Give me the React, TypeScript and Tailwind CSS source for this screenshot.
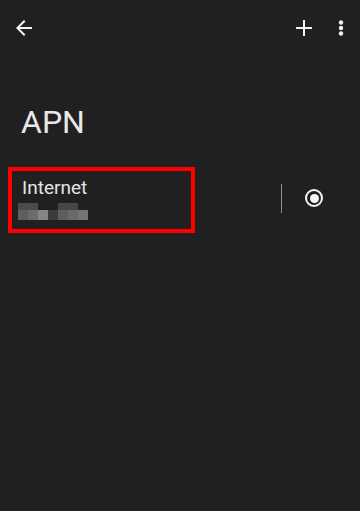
export default function App() {
  return (
    <div className="h-[511px] w-[360px] bg-[#202020] font-['Roboto',sans-serif]">
      {/* Toolbar */}
      <div className="flex h-[56px] items-center justify-between pl-3 pr-4">
        <svg viewBox="0 0 24 24" className="h-6 w-6 fill-[#f2f2f2]">
          <path d="M20 11H7.83l5.59-5.59L12 4l-8 8 8 8 1.41-1.41L7.83 13H20v-2z" />
        </svg>
        <div className="flex items-center gap-[26px]">
          <svg viewBox="0 0 16 16" className="h-4 w-4 stroke-[#f2f2f2]" strokeWidth="2">
            <path d="M8 0v16M0 8h16" />
          </svg>
          <svg viewBox="0 0 6 16" className="h-4 w-[6px] fill-[#f2f2f2]">
            <circle cx="3" cy="2.5" r="2.2" />
            <circle cx="3" cy="8" r="2.2" />
            <circle cx="3" cy="13.5" r="2.2" />
          </svg>
        </div>
      </div>

      {/* Title */}
      <div className="mt-[50px] pl-[21px] text-[32px] leading-none text-[#e8e8e8]">APN</div>

      {/* APN entry */}
      <div className="mt-[29px] flex items-center">
        <div className="ml-[8px] h-[66px] w-[187px] border-4 border-[#ff0000] pl-[10px] pt-[7px]">
          <div className="text-[19px] leading-none text-[#e4e4e4]">Internet</div>
          {/* blurred APN value */}
          <div className="-ml-[4px] mt-[6px] flex flex-col">
            <div className="flex h-[7px]">
              <div className="w-[20px] bg-[#4c4c4c]" />
              <div className="w-[20px]" />
              <div className="w-[20px] bg-[#464646]" />
            </div>
            <div className="flex h-[10px]">
              <div className="w-[10px] bg-[#5e5e5e]" />
              <div className="w-[10px] bg-[#6c6c6c]" />
              <div className="w-[10px] bg-[#858585]" />
              <div className="w-[10px] bg-[#3c3c3c]" />
              <div className="w-[10px] bg-[#5e5e5e]" />
              <div className="w-[10px] bg-[#6a6a6a]" />
              <div className="w-[10px] bg-[#757575]" />
            </div>
          </div>
        </div>
        <div className="-mt-[3px] ml-[86px] h-[29px] w-px bg-[#8c8c8c]" />
        <div className="-mt-[4px] ml-[23px] flex h-[18px] w-[18px] items-center justify-center rounded-full border-2 border-[#f5f5f5]">
          <div className="h-[9px] w-[9px] rounded-full bg-[#f5f5f5]" />
        </div>
      </div>
    </div>
  );
}
